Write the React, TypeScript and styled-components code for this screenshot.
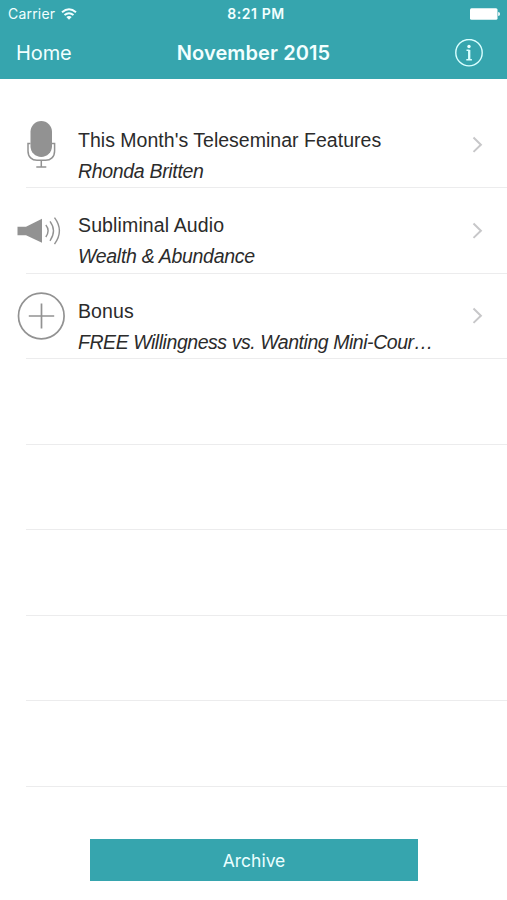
import React from "react";
import styled, { createGlobalStyle } from "styled-components";

const TEAL = "#36a5ae";
const GREY = "#929292";

const GlobalStyle = createGlobalStyle`
  * { box-sizing: border-box; }
  body { margin: 0; background: #fff; }
`;

const Screen = styled.div`
  width: 507px;
  height: 900px;
  display: flex;
  flex-direction: column;
  overflow: hidden;
  background: #fff;
  font-family: "Liberation Sans", Arial, sans-serif;
`;

const Header = styled.header`
  height: 79px;
  flex: none;
  background: ${TEAL};
  color: #f2ffff;
  font-family: Inter, sans-serif;
`;

const StatusBar = styled.div`
  height: 27px;
  display: grid;
  grid-template-columns: 1fr auto 1fr;
  grid-template-rows: 27px;
  align-items: center;
  padding: 0 7px 0 8px;
`;

const Carrier = styled.div`
  display: flex;
  align-items: center;
  gap: 6px;
  font-size: 14px;
  line-height: 27px;
  letter-spacing: 0.2px;
`;

const Clock = styled.div`
  font-size: 14px;
  line-height: 27px;
  font-weight: 600;
  letter-spacing: 0.55px;
  padding-left: 4px;
`;

const Battery = styled.svg`
  display: block;
  justify-self: end;
`;

const NavBar = styled.nav`
  height: 52px;
  display: grid;
  grid-template-columns: 1fr auto 1fr;
  align-items: center;
  padding: 0 23px 0 16px;
`;

const HomeLink = styled.span`
  font-size: 20px;
  line-height: 52px;
  letter-spacing: -0.1px;
`;

const NavTitle = styled.h1`
  margin: 0;
  padding-left: 7px;
  font-size: 20px;
  line-height: 52px;
  font-weight: 600;
  letter-spacing: 0.1px;
`;

const InfoIcon = styled.svg`
  display: block;
  justify-self: end;
`;

const List = styled.ul`
  list-style: none;
  margin: 23.5px 0 0;
  padding: 0;
  flex: none;
`;

const Row = styled.li`
  height: 85.5px;
  padding-left: 17px;
  display: grid;
  grid-template-columns: 61px 1fr 35px;
  align-items: center;
  background: linear-gradient(#ececed, #ececed) 26px 100% / 100% 1px no-repeat;
`;

const Icon = styled.svg`
  display: block;
`;

const RowText = styled.div`
  padding-top: 21.2px;
  min-width: 0;
`;

const Title = styled.div<{ $spacing: number }>`
  color: #2b2b2b;
  font-size: 19.5px;
  line-height: 31px;
  white-space: nowrap;
  letter-spacing: ${(p) => p.$spacing}px;
`;

const Subtitle = styled(Title)`
  font-style: italic;
`;

const Footer = styled.footer`
  margin-top: 52.5px;
  padding: 0 89px 0 90px;
`;

const ArchiveButton = styled.button`
  display: block;
  width: 100%;
  height: 42px;
  border: 0;
  padding: 1px 0 0;
  background: ${TEAL};
  color: #eaffff;
  font: 400 17.5px/42px Inter, sans-serif;
`;

const Microphone = () => (
  <Icon width="48" height="48" viewBox="0 0 48 48" fill="none" stroke={GREY} strokeWidth="1.5">
    <rect x="13.5" y="0" width="21.5" height="36" rx="10.75" fill={GREY} stroke="none" />
    <path d="M13.5 22.500H11v7.500c0 6 4 9.300 9 9.300h8.600c5 0 9-3.300 9-9.300V22.500H35" />
    <path d="M24.300 39.500v6.500M19.300 46h10" />
  </Icon>
);

const Speaker = () => (
  <Icon width="48" height="48" viewBox="0 0 48 48" fill="none" stroke={GREY} strokeWidth="1.400">
    <path d="M0.500 19.700H9L25 11.700v24L9 28.200H0.500z" fill={GREY} stroke="none" />
    <path d="M28.800 18q4.600 5.500 0 12M33 14.300q7 9.300 0 19.500M37.500 10.700q9.800 13 0 26.500" />
  </Icon>
);

const Plus = () => (
  <Icon width="48" height="48" viewBox="0 0 48 48" fill="none" stroke={GREY} strokeWidth="1.700">
    <circle cx="24.300" cy="24" r="22.800" />
    <path d="M24.500 11.500v25M11.800 24h25.400" />
  </Icon>
);

const Chevron = () => (
  <Icon width="14" height="18" viewBox="0 0 14 18" fill="none" stroke="#c7c7c9" strokeWidth="2">
    <path d="M1.500 1.500L8.900 8.700l-7.400 7.200" />
  </Icon>
);

const rows = [
  { icon: <Microphone />, title: "This Month's Teleseminar Features", ts: 0.02, sub: "Rhonda Britten", ss: -0.32 },
  { icon: <Speaker />, title: "Subliminal Audio", ts: 0.13, sub: "Wealth & Abundance", ss: -0.3 },
  { icon: <Plus />, title: "Bonus", ts: 0.1, sub: "FREE Willingness vs. Wanting Mini-Cour…", ss: -0.45 },
];

const emptyRows = [0, 1, 2, 3, 4];

export default function App() {
  return (
    <Screen>
      <GlobalStyle />
      <Header>
        <StatusBar>
          <Carrier>
            Carrier
            <svg width="16" height="12" viewBox="0 0 16 12" fill="none" stroke="#f2ffff" strokeWidth="2">
              <path d="M1 4.300q7-6 14 0M3.500 7.100q4.500-3.800 9 0" />
              <path d="M5.300 8.900q2.700-2 5.400 0L8 11.700z" fill="#f2ffff" stroke="none" />
            </svg>
          </Carrier>
          <Clock>8:21 PM</Clock>
          <Battery width="30" height="12" viewBox="0 0 30 12" fill="#fff">
            <rect x="0" y="0.300" width="27.500" height="11.400" rx="1.500" />
            <path d="M28.200 4q1.800 0 1.800 2t-1.800 2z" />
          </Battery>
        </StatusBar>
        <NavBar>
          <HomeLink>Home</HomeLink>
          <NavTitle>November 2015</NavTitle>
          <InfoIcon width="29" height="29" viewBox="0 0 29 29" fill="none" stroke="#d9ffff" strokeWidth="1.400">
            <circle cx="14" cy="13.700" r="13.200" />
            <circle cx="14" cy="7.500" r="1.700" fill="#eaffff" stroke="none" />
            <path d="M11.500 11.300h3M11.300 20.800h5.600" />
            <path d="M14.200 11v9.800" strokeWidth="2.300" />
          </InfoIcon>
        </NavBar>
      </Header>
      <List>
        {rows.map((r) => (
          <Row key={r.title}>
            {r.icon}
            <RowText>
              <Title $spacing={r.ts}>{r.title}</Title>
              <Subtitle $spacing={r.ss}>{r.sub}</Subtitle>
            </RowText>
            <Chevron />
          </Row>
        ))}
        {emptyRows.map((n) => (
          <Row key={n} />
        ))}
      </List>
      <Footer>
        <ArchiveButton>Archive</ArchiveButton>
      </Footer>
    </Screen>
  );
}
